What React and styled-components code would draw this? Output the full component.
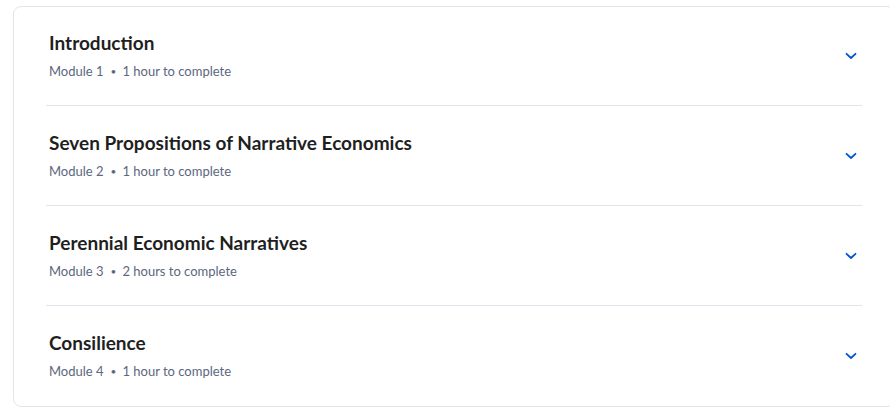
import styled, { createGlobalStyle } from "styled-components"

const Global = createGlobalStyle`
html, body {
  margin: 0;
  background: #fff;
  overflow: hidden;
}
body {
  font-family: "Source Sans Pro", "Lato", "Noto Sans", sans-serif;
}
`

const Page = styled.div`
padding: 6px 0 0 13px;
`

const Card = styled.div`
width: 882px;
box-sizing: border-box;
border: 1px solid #dfe5ec;
border-radius: 8px;
padding: 0 32px;
background: #fff;
`

const Row = styled.div`
display: flex;
align-items: center;
justify-content: space-between;
height: 99px;
padding: 0 0 0 3px;
box-sizing: border-box;
border-bottom: 1px solid #dfe5ec;
&:last-child {
  border-bottom: none;
}
& + & {
  height: 100px;
}
`

const Text = styled.div`
display: flex;
flex-direction: column;
gap: 7px;
margin-top: -1px;
`

const Title = styled.h3`
margin: 0;
font-size: 19px;
line-height: 24px;
font-weight: 700;
color: #1f1f1f;
`

const Meta = styled.div`
display: flex;
align-items: center;
font-size: 13px;
line-height: 18px;
color: #5b6780;
`

const Dot = styled.span`
margin: 0 6px 0 7px;
font-size: 10px;
`

const Toggle = styled.button`
border: none;
background: none;
padding: 0;
width: 20px;
height: 20px;
display: flex;
align-items: center;
justify-content: center;
margin-right: 1px;
color: #0056d2;
cursor: pointer;
`

const modules = [
  { title: "Introduction", n: 1, time: "1 hour to complete" },
  { title: "Seven Propositions of Narrative Economics", n: 2, time: "1 hour to complete" },
  { title: "Perennial Economic Narratives", n: 3, time: "2 hours to complete" },
  { title: "Consilience", n: 4, time: "1 hour to complete" },
]

const Chevron = () => (
  <svg width="12" height="8" viewBox="0 0 12 8" fill="none">
    <path d="M1.5 1.8 6 6 10.5 1.8" stroke="currentColor" strokeWidth="1.8" strokeLinecap="round" strokeLinejoin="round" />
  </svg>
)

const App = () => {
  return (
    <>
      <Global />
      <Page>
        <Card>
          {modules.map((m) => (
            <Row key={m.n}>
              <Text>
                <Title>{m.title}</Title>
                <Meta>
                  Module {m.n}
                  <Dot>•</Dot>
                  {m.time}
                </Meta>
              </Text>
              <Toggle aria-label="expand">
                <Chevron />
              </Toggle>
            </Row>
          ))}
        </Card>
      </Page>
    </>
  )
}

export default App
